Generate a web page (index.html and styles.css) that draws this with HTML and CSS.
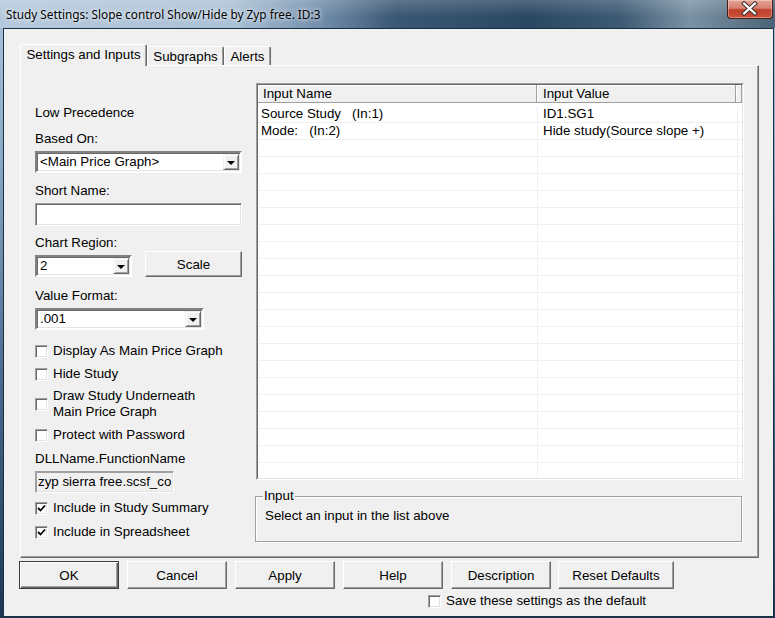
FILE: index.html
```html
<!DOCTYPE html>
<html>
<head>
<meta charset="utf-8">
<link rel="stylesheet" href="styles.css">
</head>
<body>
<div class="window">
  <div class="titlebar">
    <span class="title">Study Settings: Slope control Show/Hide by Zyp free. ID:3</span>
    <div class="close">
      <svg width="46" height="19" viewBox="0 0 46 19">
        <path d="M17.5 4.5 L28.5 14.5 M28.5 4.5 L17.5 14.5" stroke="#3a2a2a" stroke-width="4.2" stroke-linecap="square" fill="none"/>
        <path d="M17.5 4.5 L28.5 14.5 M28.5 4.5 L17.5 14.5" stroke="#ffffff" stroke-width="2.2" stroke-linecap="square" fill="none"/>
      </svg>
    </div>
  </div>
  <div class="client">
    <div class="tabs">
      <div class="tab active t1">Settings and Inputs</div>
      <div class="tab t2">Subgraphs</div>
      <div class="tab t3">Alerts</div>
    </div>
    <div class="panel">
      <div class="leftcol">
        <div class="lbl">Low Precedence</div>
        <div class="lbl mt10">Based On:</div>
        <div class="combo w207 mt4"><span class="cval">&lt;Main Price Graph&gt;</span><span class="cbtn"><i class="tri"></i></span></div>
        <div class="lbl mt10">Short Name:</div>
        <div class="edit w207 mt4"></div>
        <div class="lbl mt9">Chart Region:</div>
        <div class="region-row">
          <div class="combo w97 mt4"><span class="cval">2</span><span class="cbtn"><i class="tri"></i></span></div>
          <div class="btn scale">Scale</div>
        </div>
        <div class="lbl mt11">Value Format:</div>
        <div class="combo w169 mt4"><span class="cval">.001</span><span class="cbtn"><i class="tri"></i></span></div>
        <div class="chk mt13"><span class="box"></span><span>Display As Main Price Graph</span></div>
        <div class="chk mt7"><span class="box"></span><span>Hide Study</span></div>
        <div class="chk two mt6"><span class="box"></span><span>Draw Study Underneath<br>Main Price Graph</span></div>
        <div class="chk mt7"><span class="box"></span><span>Protect with Password</span></div>
        <div class="lbl mt8">DLLName.FunctionName</div>
        <div class="edit ro w139 mt4">zyp sierra free.scsf_co</div>
        <div class="chk mt7"><span class="box"><svg width="9" height="9" viewBox="0 0 9 9"><path d="M1 4 L3.5 6.5 L8 1.5" stroke="#000" stroke-width="1.8" fill="none"/></svg></span><span>Include in Study Summary</span></div>
        <div class="chk mt8"><span class="box"><svg width="9" height="9" viewBox="0 0 9 9"><path d="M1 4 L3.5 6.5 L8 1.5" stroke="#000" stroke-width="1.8" fill="none"/></svg></span><span>Include in Spreadsheet</span></div>
      </div>
      <div class="rightcol">
        <div class="list">
          <div class="list-in">
            <div class="lhead">
              <div class="hc h1">Input Name</div>
              <div class="hc h2">Input Value</div>
              <div class="hc h3"></div>
            </div>
            <div class="rows">
              <div class="r"><div class="a">Source Study   (In:1)</div><div class="b">ID1.SG1</div></div>
              <div class="r"><div class="a">Mode:   (In:2)</div><div class="b">Hide study(Source slope +)</div></div>
              <div class="r"><div class="a"></div><div class="b"></div></div>
              <div class="r"><div class="a"></div><div class="b"></div></div>
              <div class="r"><div class="a"></div><div class="b"></div></div>
              <div class="r"><div class="a"></div><div class="b"></div></div>
              <div class="r"><div class="a"></div><div class="b"></div></div>
              <div class="r"><div class="a"></div><div class="b"></div></div>
              <div class="r"><div class="a"></div><div class="b"></div></div>
              <div class="r"><div class="a"></div><div class="b"></div></div>
              <div class="r"><div class="a"></div><div class="b"></div></div>
              <div class="r"><div class="a"></div><div class="b"></div></div>
              <div class="r"><div class="a"></div><div class="b"></div></div>
              <div class="r"><div class="a"></div><div class="b"></div></div>
              <div class="r"><div class="a"></div><div class="b"></div></div>
              <div class="r"><div class="a"></div><div class="b"></div></div>
              <div class="r"><div class="a"></div><div class="b"></div></div>
              <div class="r"><div class="a"></div><div class="b"></div></div>
              <div class="r"><div class="a"></div><div class="b"></div></div>
              <div class="r"><div class="a"></div><div class="b"></div></div>
              <div class="r"><div class="a"></div><div class="b"></div></div>
              <div class="r"><div class="a"></div><div class="b"></div></div>
            </div>
          </div>
        </div>
        <div class="group">
          <span class="group-label">Input</span>
          <div class="group-text">Select an input in the list above</div>
        </div>
      </div>
    </div>
    <div class="buttons">
      <div class="btn bb default">OK</div>
      <div class="btn bb">Cancel</div>
      <div class="btn bb">Apply</div>
      <div class="btn bb">Help</div>
      <div class="btn bb">Description</div>
      <div class="btn bb wide">Reset Defaults</div>
    </div>
    <div class="saverow">
      <div class="chk"><span class="box"></span><span>Save these settings as the default</span></div>
    </div>
  </div>
</div>
</body>
</html>
```

FILE: styles.css
```css
* { box-sizing: border-box; }
html, body { margin: 0; padding: 0; }
body {
  width: 775px;
  height: 618px;
  overflow: hidden;
  font-family: "Liberation Sans", Arial, sans-serif;
  font-size: 13.33px;
  color: #000;
}
.window {
  width: 775px;
  height: 618px;
  display: flex;
  flex-direction: column;
  background: linear-gradient(to bottom, #a9c3dc 0%, #8aa9c6 25%, #4b6d8f 60%, #1b3654 100%);
}
.titlebar {
  height: 28px;
  flex: none;
  display: flex;
  justify-content: space-between;
  align-items: flex-start;
  background:
    linear-gradient(to bottom, rgba(255,255,255,0.18), rgba(255,255,255,0) 60%),
    linear-gradient(to right, #b5c9dc 0%, #abc1d6 30%, #7390ad 41%, #3a5874 51%, #2a4763 68%, #3d5a74 80%, #7a92a4 89%, #62798b 95%, #4a6378 100%);
}
.title {
  padding-left: 6px;
  line-height: 28px;
  font-family: "Noto Sans", "Open Sans", sans-serif;
  font-size: 11.8px;
  color: #000;
  text-shadow: 0 0 6px rgba(255,255,255,0.9), 0 0 3px rgba(255,255,255,0.7);
  white-space: nowrap;
}
.close {
  width: 46px;
  height: 19px;
  margin-right: 2px;
  border: 1px solid #4a1d17;
  border-top: none;
  border-radius: 0 0 4px 4px;
  background: linear-gradient(to bottom, #e5a396 0%, #d8806f 45%, #c0402a 55%, #c8523b 100%);
  box-shadow: inset 0 0 0 1px rgba(255,255,255,0.35);
  display: flex;
}
.close svg { display: block; margin: -1px 0 0 -1px; }
.client {
  flex: 1;
  margin: 0 1px 1px 3px;
  border: 1px solid #1c2e42;
  background: #f0f0f0;
  display: flex;
  flex-direction: column;
}
.tabs {
  display: flex;
  align-items: flex-end;
  height: 36px;
  padding-left: 16px;
  position: relative;
  z-index: 2;
}
.tab {
  height: 19px;
  line-height: 19px;
  text-align: center;
  border-top: 1px solid #fff;
  border-left: 1px solid #fff;
  border-right: 1px solid #696969;
  box-shadow: inset -1px 0 #a0a0a0;
  border-radius: 2px 2px 0 0;
  background: #f0f0f0;
  white-space: nowrap;
}
.tab.active {
  height: 22px;
  line-height: 19px;
  margin-bottom: -1px;
}
.t1 { width: 127px; }
.t2 { width: 77px; }
.t3 { width: 47px; }
.panel {
  margin-left: 16px;
  width: 739px;
  height: 493px;
  border-top: 1px solid #fff;
  border-left: 1px solid #fff;
  border-right: 1px solid #696969;
  border-bottom: 1px solid #696969;
  box-shadow: inset -1px -1px #a0a0a0;
  display: flex;
}
.leftcol {
  width: 235px;
  padding: 39px 0 0 14px;
  display: flex;
  flex-direction: column;
  align-items: flex-start;
}
.lbl { height: 16px; line-height: 16px; white-space: nowrap; }
.mt4 { margin-top: 4px; }
.mt6 { margin-top: 6px; }
.mt7 { margin-top: 7px; }
.mt8 { margin-top: 8px; }
.mt9 { margin-top: 9px; }
.mt10 { margin-top: 10px; }
.mt11 { margin-top: 11px; }
.mt13 { margin-top: 13px; }
.w207 { width: 207px; }
.w169 { width: 169px; }
.w139 { width: 139px; }
.w97 { width: 97px; }
.combo {
  height: 22px;
  background: #fff;
  border: 2px solid;
  border-color: #828282 #fff #fff #828282;
  box-shadow: inset 1px 1px #696969, inset -1px -1px #e3e3e3;
  display: flex;
  align-items: stretch;
  padding: 1px;
}
.cval {
  flex: 1;
  line-height: 16px;
  padding-left: 2px;
  white-space: nowrap;
  overflow: hidden;
}
.cbtn {
  width: 16px;
  background: #f0f0f0;
  border: 1px solid;
  border-color: #f0f0f0 #696969 #696969 #f0f0f0;
  box-shadow: inset 1px 1px #fff, inset -1px -1px #a0a0a0;
  display: flex;
  align-items: center;
  justify-content: center;
}
.tri {
  width: 0;
  height: 0;
  border-left: 4px solid transparent;
  border-right: 4px solid transparent;
  border-top: 4px solid #000;
  margin-top: 1px;
}
.edit {
  height: 23px;
  background: #fff;
  border: 1px solid;
  border-color: #a0a0a0 #fff #fff #a0a0a0;
  box-shadow: inset 1px 1px #696969, inset -1px -1px #e3e3e3;
}
.edit.ro {
  height: 22px;
  background: #f0f0f0;
  border-color: #a0a0a0 #fff #fff #a0a0a0;
  box-shadow: inset 1px 1px #a0a0a0, inset -1px -1px #e3e3e3;
  line-height: 20px;
  padding-left: 2px;
  white-space: nowrap;
  overflow: hidden;
}
.region-row {
  display: flex;
  align-items: flex-start;
  height: 26px;
}
.btn {
  background: #f0f0f0;
  border: 1px solid;
  border-color: #fff #696969 #696969 #fff;
  box-shadow: inset -1px -1px #a0a0a0, inset 1px 1px #f0f0f0;
  display: flex;
  align-items: center;
  justify-content: center;
  white-space: nowrap;
}
.scale {
  width: 97px;
  height: 26px;
  margin-left: 13px;
}
.chk {
  display: flex;
  align-items: center;
  line-height: 16px;
  white-space: nowrap;
}
.chk .box {
  width: 13px;
  height: 13px;
  flex: none;
  margin-right: 5px;
  background: #fff;
  border: 1px solid;
  border-color: #a0a0a0 #fff #fff #a0a0a0;
  box-shadow: inset 1px 1px #696969, inset -1px -1px #e3e3e3;
  display: flex;
  align-items: center;
  justify-content: center;
}
.chk .box svg { display: block; }
.chk.two .box { margin-top: 1px; }
.rightcol {
  width: 488px;
  padding-top: 17px;
  display: flex;
  flex-direction: column;
}
.list {
  width: 488px;
  height: 397px;
  border: 1px solid;
  border-color: #a0a0a0 #fff #fff #a0a0a0;
}
.list-in {
  height: 100%;
  border: 1px solid;
  border-color: #696969 #e3e3e3 #e3e3e3 #696969;
  background: #fff;
  overflow: hidden;
}
.lhead {
  display: flex;
  height: 18px;
}
.hc {
  height: 18px;
  line-height: 18px;
  background: #f0f0f0;
  border-right: 1px solid #a0a0a0;
  border-bottom: 1px solid #a0a0a0;
  box-shadow: inset 1px 1px #fff;
  white-space: nowrap;
}
.h1 { width: 279px; padding-left: 5px; }
.h2 { width: 199px; padding-left: 6px; }
.h3 { flex: 1; }
.rows { padding-top: 3px; }
.r {
  display: flex;
  height: 17px;
  border-bottom: 1px solid #f0f0f0;
}
.r .a {
  width: 280px;
  border-right: 1px solid #f0f0f0;
  padding-left: 3px;
  line-height: 16px;
  white-space: pre;
}
.r .b {
  width: 200px;
  border-right: 1px solid #f0f0f0;
  padding-left: 5px;
  line-height: 16px;
  white-space: pre;
}
.group {
  position: relative;
  margin: 16px 0 0 -1px;
  width: 487px;
  height: 46px;
  border: 1px solid #a0a0a0;
  box-shadow: inset 1px 1px #fff, 1px 1px #fff;
  padding: 11px 0 0 9px;
}
.group-label {
  position: absolute;
  top: -9px;
  left: 7px;
  padding: 0 1px;
  background: #f0f0f0;
  line-height: 16px;
}
.group-text { line-height: 16px; white-space: nowrap; }
.buttons {
  display: flex;
  gap: 8px;
  margin: 3px 0 0 15px;
}
.bb { width: 100px; height: 28px; }
.bb.wide { width: 116px; margin-left: -1px; }
.bb.default {
  border: 1px solid #3c3c3c;
  box-shadow: inset 1px 1px #fff, inset -1px -1px #696969, inset -2px -2px #a0a0a0;
}
.saverow {
  margin: 4px 0 0 424px;
  height: 16px;
}
```
